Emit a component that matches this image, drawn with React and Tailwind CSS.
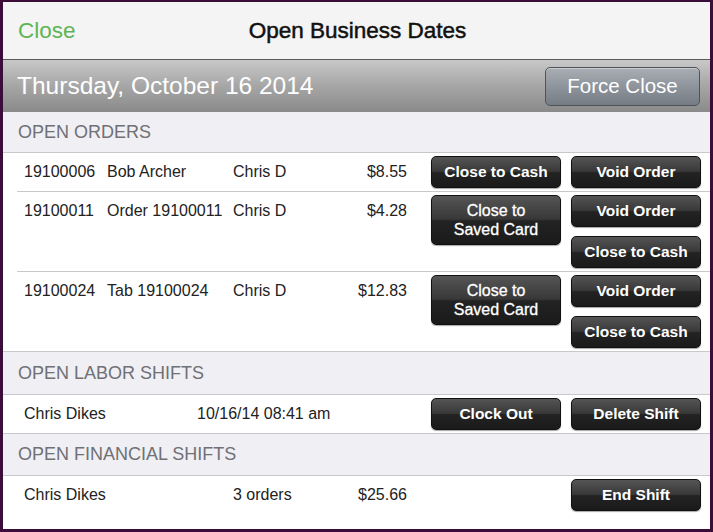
import React from "react";

const font = { fontFamily: '"Liberation Sans", Arial, sans-serif' };

function DarkBtn({ children, tall, regular }) {
  return (
    <div
      className={`w-[130px] ${tall ? "h-[50px]" : "h-[32px]"} flex items-center justify-center text-center rounded-[5px] border border-[#111] bg-[linear-gradient(to_bottom,#555_0%,#383838_48%,#232323_52%,#1a1a1a_100%)] shadow-[0_1px_1px_rgba(0,0,0,0.35)] text-white ${regular ? "font-normal text-[16px] leading-[19px] [-webkit-text-stroke:0.3px_#fff]" : "font-bold text-[15.5px]"}`}
    >
      {children}
    </div>
  );
}

function SectionHeader({ children, h }) {
  return (
    <div className={`${h} bg-[#efeff4] border-b border-[#c8c7cc] flex items-center pl-[15px] text-[18px] text-[#707075]`}>
      {children}
    </div>
  );
}

function Sep() {
  return <div className="h-px bg-[#c8c7cc] ml-[14px]" />;
}

function OrderRow({ id, name, server, amount, simple }) {
  return (
    <div className="flex items-start py-[3px] pl-[21px] pr-[9px] text-[16px] text-[#222]">
      <div className="w-[83px] leading-[32px]">{id}</div>
      <div className="w-[126px] leading-[32px] whitespace-nowrap">{name}</div>
      <div className="w-[80px] leading-[32px]">{server}</div>
      <div className="w-[94px] leading-[32px] text-right">{amount}</div>
      <div className="ml-auto flex gap-[10px]">
        {simple ? (
          <>
            <DarkBtn>Close to Cash</DarkBtn>
            <DarkBtn>Void Order</DarkBtn>
          </>
        ) : (
          <>
            <DarkBtn tall regular>
              Close to
              <br />
              Saved Card
            </DarkBtn>
            <div className="flex flex-col gap-[9px]">
              <DarkBtn>Void Order</DarkBtn>
              <DarkBtn>Close to Cash</DarkBtn>
            </div>
          </>
        )}
      </div>
    </div>
  );
}

export default function App() {
  return (
    <div style={font} className="w-[713px] h-[532px] border-t-2 border-l-[3px] border-r-[3px] border-b-[3px] border-[#3b0d39] bg-white overflow-hidden flex flex-col">
      {/* Nav bar */}
      <div className="h-[58px] shrink-0 bg-[#f4f4f4] border-b border-[#5a5a5a] relative flex items-center">
        <div className="pl-[15px] text-[22.5px] text-[#5fb556]">Close</div>
        <div className="absolute left-0 right-0 top-0 bottom-0 flex items-center justify-center pointer-events-none">
          <div className="text-[22.5px] font-normal text-[#111] ml-[2px] [-webkit-text-stroke:0.5px_#111]">Open Business Dates</div>
        </div>
      </div>

      {/* Date bar */}
      <div className="h-[52px] shrink-0 bg-[linear-gradient(to_bottom,#c8c8c8_0%,#a6a6a6_50%,#8a8a8a_100%)] flex items-center pl-[14px] pr-[10px]">
        <div className="text-[24.5px] text-white">Thursday, October 16 2014</div>
        <div className="ml-auto w-[155px] h-[39px] rounded-[5px] border border-[#4e535a] bg-[linear-gradient(to_bottom,#a9aeb4_0%,#8e949b_50%,#767c84_100%)] shadow-[inset_0_1px_0_rgba(255,255,255,0.35)] flex items-center justify-center text-white text-[20.5px]">
          Force Close
        </div>
      </div>

      <SectionHeader h="h-[41px]">OPEN ORDERS</SectionHeader>
      <OrderRow id="19100006" name="Bob Archer" server="Chris D" amount="$8.55" simple />
      <Sep />
      <OrderRow id="19100011" name="Order 19100011" server="Chris D" amount="$4.28" />
      <Sep />
      <OrderRow id="19100024" name="Tab 19100024" server="Chris D" amount="$12.83" />
      <div className="h-px bg-[#c8c7cc]" />

      <SectionHeader h="h-[43px]">OPEN LABOR SHIFTS</SectionHeader>
      <div className="flex items-center py-[2px] pl-[21px] pr-[9px] text-[16px] text-[#222] h-[38px]">
        <div className="w-[173px]">Chris Dikes</div>
        <div>10/16/14 08:41 am</div>
        <div className="ml-auto flex gap-[10px]">
          <DarkBtn>Clock Out</DarkBtn>
          <DarkBtn>Delete Shift</DarkBtn>
        </div>
      </div>
      <div className="h-px bg-[#c8c7cc]" />

      <SectionHeader h="h-[42px]">OPEN FINANCIAL SHIFTS</SectionHeader>
      <div className="flex items-center py-[2px] pl-[21px] pr-[9px] text-[16px] text-[#222] h-[38px]">
        <div className="w-[209px]">Chris Dikes</div>
        <div className="w-[80px]">3 orders</div>
        <div className="w-[94px] text-right">$25.66</div>
        <div className="ml-auto flex gap-[10px]">
          <DarkBtn>End Shift</DarkBtn>
        </div>
      </div>
      <div className="flex-1 bg-white" />
    </div>
  );
}
